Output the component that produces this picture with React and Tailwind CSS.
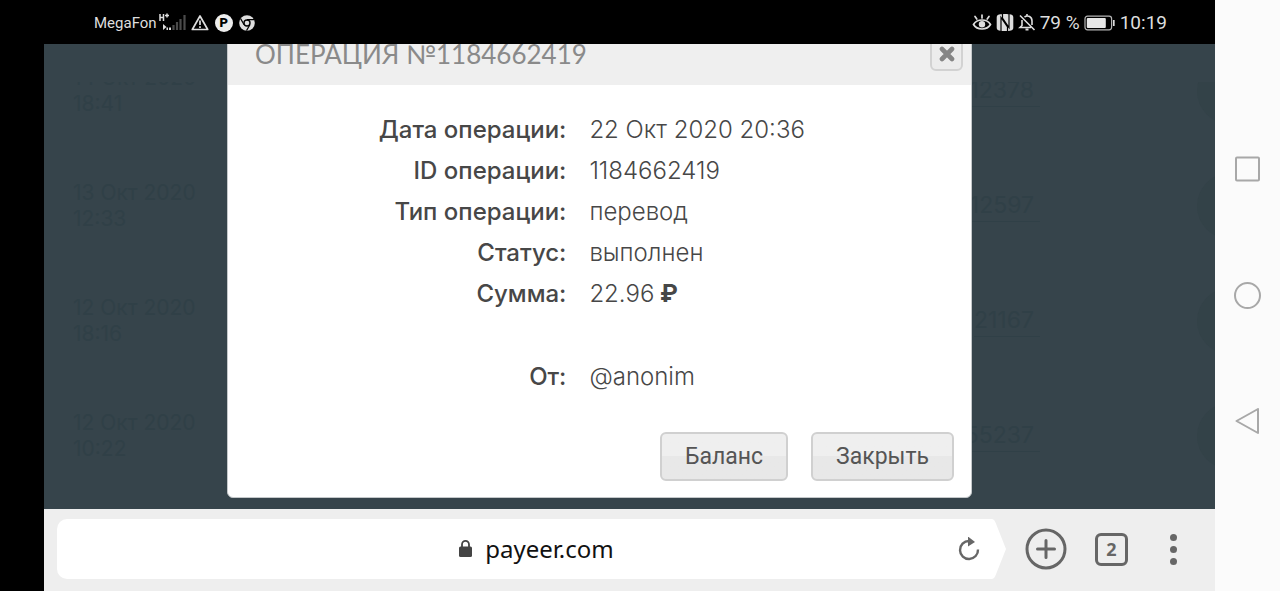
import React from "react";

const operation = [
  { label: "Дата операции:", value: "22 Окт 2020 20:36" },
  { label: "ID операции:", value: "1184662419" },
  { label: "Тип операции:", value: "перевод" },
  { label: "Статус:", value: "выполнен" },
  { label: "Сумма:", value: "22.96", currency: "₽" },
];

const history = [
  { date: "14 Окт 2020", time: "18:41", id: "12378" },
  { date: "13 Окт 2020", time: "12:33", id: "12597" },
  { date: "12 Окт 2020", time: "18:16", id: "21167" },
  { date: "12 Окт 2020", time: "10:22", id: "55237" },
];

const StatusBar = () => (
  <header className="flex h-11 items-center justify-between bg-black pt-0.5 pr-12 pl-[94px] font-[Roboto,sans-serif] text-[#dedede]">
    <div className="flex items-center gap-1">
      <span className="text-[15px] leading-5">MegaFon</span>
      <svg className="-ml-0.5 h-5 w-7" viewBox="0 0 28 20" aria-label="H+">
        <g fill="none" stroke="#dedede" strokeWidth="1.5">
          <path d="M1 1v7M4.500 1v7M1 4.500h3.500M6 2.500h4M8 .5v4" />
        </g>
        <path d="M4 11l3.500 3-3.500 3zM7.500 14.500h1.500v2.500H7.500zM10 14.500h2v2.500h-2z" fill="#dedede" />
        <path
          d="M14.500 12v5M18 9v8M21.500 6v11M25.500 2v15"
          stroke="#4b4b4b"
          strokeWidth="2.200"
        />
      </svg>
      <svg className="h-5 w-[18px]" viewBox="0 0 18 20" aria-hidden="true">
        <path
          d="M9 3L16.700 16.500H1.300z"
          fill="none"
          stroke="#dedede"
          strokeWidth="1.7"
          strokeLinejoin="round"
        />
        <path d="M9 7.500v4.500M9 13.200v1.700" stroke="#dedede" strokeWidth="1.7" />
      </svg>
      <span className="ml-0.5 flex size-[18px] items-center justify-center rounded-full bg-[#eeeeee] text-[13px] leading-4 font-black text-black">
        P
      </span>
      <svg className="ml-0.5 size-4" viewBox="0 0 16 16" aria-hidden="true">
        <circle cx="8" cy="8" r="7.800" fill="#dedede" />
        <circle cx="8" cy="8" r="3.700" fill="#000" />
        <circle cx="8" cy="8" r="2.300" fill="#dedede" />
        <path
          d="M8 4.600h7M5.100 9.700L1.600 3.600M10.900 9.700L7.500 15.600"
          stroke="#000"
          strokeWidth="1.200"
        />
      </svg>
    </div>
    <div className="flex items-center text-[19px] leading-6">
      <svg className="h-5 w-5" viewBox="0 0 20 20" aria-hidden="true">
        <g fill="none" stroke="#dedede" strokeWidth="1.700" strokeLinecap="round">
          <path d="M1.500 11.500C5 5.500 15 5.500 18.500 11.500C15 17.500 5 17.500 1.500 11.500z" />
          <path d="M10 5V2M4.800 6L3 3.500M15.200 6L17 3.500" />
        </g>
        <circle cx="10" cy="11.300" r="3.200" fill="#dedede" />
      </svg>
      <svg className="ml-1 h-5 w-[18px]" viewBox="0 0 18 20" aria-hidden="true">
        <path d="M3 1.500C6 .8 12 .8 15 1.500C17 2 17.300 3 17.300 5v9c0 2-.3 3-2.300 3.500C12 18.200 6 18.200 3 17.500C1 17 .7 16 .7 14V5C.7 3 1 2 3 1.500z" fill="#dedede" />
        <path d="M5 18V4.500l6.500 9.500M13 1v13.500L6.500 5V1M11.500 14v4" fill="none" stroke="#000" strokeWidth="1.200" />
      </svg>
      <svg className="ml-1 h-5 w-[18px]" viewBox="0 0 18 20" aria-hidden="true">
        <g fill="none" stroke="#dedede" strokeWidth="1.600">
          <path d="M4 7v5.500L2 14.500h11M6.500 4C10 1.500 14 4 14 8v4M2 2.500L16.500 17M9 3V1" />
          <path d="M7.500 16.500h3" strokeWidth="2" />
        </g>
      </svg>
      <span className="ml-1">79 %</span>
      <svg className="ml-1 h-4 w-8" viewBox="0 0 32 16" aria-hidden="true">
        <rect x="1" y="1.200" width="26.600" height="13.600" rx="2.500" fill="none" stroke="#b5b5b5" strokeWidth="1.200" />
        <rect x="2.800" y="3" width="19" height="10" rx="1" fill="#e8e8e8" />
        <path d="M29.800 5v6" stroke="#dedede" strokeWidth="1.700" />
      </svg>
      <time className="ml-1">10:19</time>
    </div>
  </header>
);

const HistoryList = () => (
  <div className="col-start-1 row-start-1 font-[Inter,sans-serif] text-[#304047]">
    <div className="relative z-10 h-[38px] bg-[#36444b]" />
    <ul className="-mt-[49px]">
      {history.map((row) => (
        <li key={row.time} className="flex h-[115px] items-center pl-[29px]">
          <div className="flex-1 text-[21px] leading-[26px]">
            <p>{row.date}</p>
            <p>{row.time}</p>
          </div>
          <a
            href="#operation"
            className="mr-[157px] border-b border-[#304047] pr-1.5 text-[23px] leading-8"
          >
            {row.id}
          </a>
          <span className="-mr-12 size-[66px] rounded-full bg-[#334248]" />
        </li>
      ))}
    </ul>
  </div>
);

const OperationDialog = () => (
  <section
    id="operation"
    role="dialog"
    aria-labelledby="operation-title"
    className="z-20 col-start-1 row-start-1 -mt-[22px] mr-[243px] mb-[10px] ml-[183px] self-start overflow-hidden rounded-md border border-[#c4c8ca] bg-white"
  >
    <div className="flex h-[62px] items-center justify-between bg-[#efefef] pr-2 pl-[27px]">
      <h1
        id="operation-title"
        className="font-[Lato,'Open_Sans',sans-serif] text-[26px] leading-5 whitespace-nowrap text-[#8a8a8a]"
      >
        ОПЕРАЦИЯ №1184662419
      </h1>
      <button
        aria-label="Закрыть окно"
        className="flex size-[33px] items-center justify-center rounded-md border-2 border-[#d2d2d2] bg-[#ececec]"
      >
        <svg className="size-4" viewBox="0 0 16 16">
          <path d="M3 3l10 10M13 3L3 13" stroke="#858585" strokeWidth="4.600" strokeLinecap="round" />
        </svg>
      </button>
    </div>

    <dl className="pt-6 font-[Inter,sans-serif] text-[24px] leading-[41px] text-[#474747]">
      {operation.map((item) => (
        <div key={item.label} className="grid grid-cols-[47fr_53fr] gap-x-[23px]">
          <dt className="text-right font-medium">{item.label}</dt>
          <dd className="font-light">
            {item.value}
            {item.currency && <b className="font-bold"> {item.currency}</b>}
          </dd>
        </div>
      ))}
      <div className="mt-[42px] grid grid-cols-[47fr_53fr] gap-x-[23px]">
        <dt className="text-right font-medium">От:</dt>
        <dd className="font-light">@anonim</dd>
      </div>
    </dl>

    <div className="flex justify-end gap-[23px] px-[17px] pt-[35px] pb-4 font-[Roboto,sans-serif] text-[23px] leading-[45px] text-[#555555]">
      <button className="rounded-md border-2 border-[#d0d0d0] bg-linear-to-b from-[#efefef] from-50% to-[#e8e8e8] to-50% px-[23px]">
        Баланс
      </button>
      <button className="rounded-md border-2 border-[#d0d0d0] bg-linear-to-b from-[#efefef] from-50% to-[#e8e8e8] to-50% px-[23px]">
        Закрыть
      </button>
    </div>
  </section>
);

const BrowserBar = () => (
  <footer className="flex h-[82px] items-center bg-[#eeeeee] pr-[25px] pb-0.5 pl-[13px] text-[#666666]">
    <form className="flex h-[60px] flex-1">
      <div className="flex flex-1 items-center rounded-l-[10px] bg-white pl-[70px]">
        <label className="flex flex-1 items-center justify-center gap-3">
          <svg className="h-[18px] w-4" viewBox="0 0 16 18" aria-label="Адрес сайта">
            <rect x="2" y="6.500" width="13" height="10.500" rx="1.500" fill="#444444" />
            <path d="M5 7V4.400a3.500 3.500 0 017 0v2.600" fill="none" stroke="#444444" strokeWidth="1.800" />
          </svg>
          <input
            type="text"
            defaultValue="payeer.com"
            className="field-sizing-content bg-transparent font-['Noto_Sans',sans-serif] text-[24px] leading-8 text-[#111111] outline-none"
          />
        </label>
        <button type="button" aria-label="Обновить" className="flex w-12 justify-center">
          <svg className="size-6" viewBox="0 0 24 24">
            <path d="M22 12.500A9 9 0 1113 4" fill="none" stroke="#666666" strokeWidth="2.400" />
            <path d="M12 -.5v10L19 5z" fill="#666666" />
          </svg>
        </button>
      </div>
      <svg className="h-full w-[14px]" viewBox="0 0 14 60" aria-hidden="true">
        <path d="M-1 0C2 0 2.500 1.500 3.500 3.500L14 30L3.500 56.500C2.500 58.500 2 60-1 60z" fill="#ffffff" />
      </svg>
    </form>
    <button aria-label="Новая вкладка" className="ml-[19px]">
      <svg className="size-[42px]" viewBox="0 0 42 42">
        <g fill="none" stroke="#666666" strokeWidth="3" strokeLinecap="round">
          <circle cx="21" cy="21" r="19" />
          <path d="M12.500 21h17M21 12.500v17" />
        </g>
      </svg>
    </button>
    <button className="ml-7 size-[33px] rounded-md border-3 border-[#666666] font-['Open_Sans',sans-serif] text-[18px] leading-[26px] font-bold">
      2
    </button>
    <button aria-label="Меню" className="ml-7 flex w-[34px] flex-col items-center gap-[5px]">
      <span className="size-[7px] rounded-full bg-[#666666]" />
      <span className="size-[7px] rounded-full bg-[#666666]" />
      <span className="size-[7px] rounded-full bg-[#666666]" />
    </button>
  </footer>
);

const SystemNav = () => (
  <nav className="flex w-[65px] flex-col items-center justify-center gap-[98px] bg-[#fbfbfb]">
    <button aria-label="Недавние">
      <svg className="size-7" viewBox="0 0 28 28">
        <rect x="2" y="1.500" width="23" height="23" rx="1" fill="none" stroke="#a8a8a8" strokeWidth="2" />
      </svg>
    </button>
    <button aria-label="Домой">
      <svg className="size-7" viewBox="0 0 28 28">
        <circle cx="13.500" cy="13.500" r="12.500" fill="none" stroke="#a8a8a8" strokeWidth="2" />
      </svg>
    </button>
    <button aria-label="Назад">
      <svg className="size-7" viewBox="0 0 28 28">
        <path d="M24 1v24L2.500 13z" fill="none" stroke="#a8a8a8" strokeWidth="2" strokeLinejoin="round" />
      </svg>
    </button>
  </nav>
);

export default function App() {
  return (
    <div className="flex min-h-screen bg-black">
      <div className="flex min-w-0 flex-1 flex-col">
        <StatusBar />
        <div className="ml-11 flex flex-1 flex-col">
          <main className="grid flex-1 content-start overflow-hidden bg-[#36444b]">
            <HistoryList />
            <OperationDialog />
          </main>
          <BrowserBar />
        </div>
      </div>
      <SystemNav />
    </div>
  );
}
